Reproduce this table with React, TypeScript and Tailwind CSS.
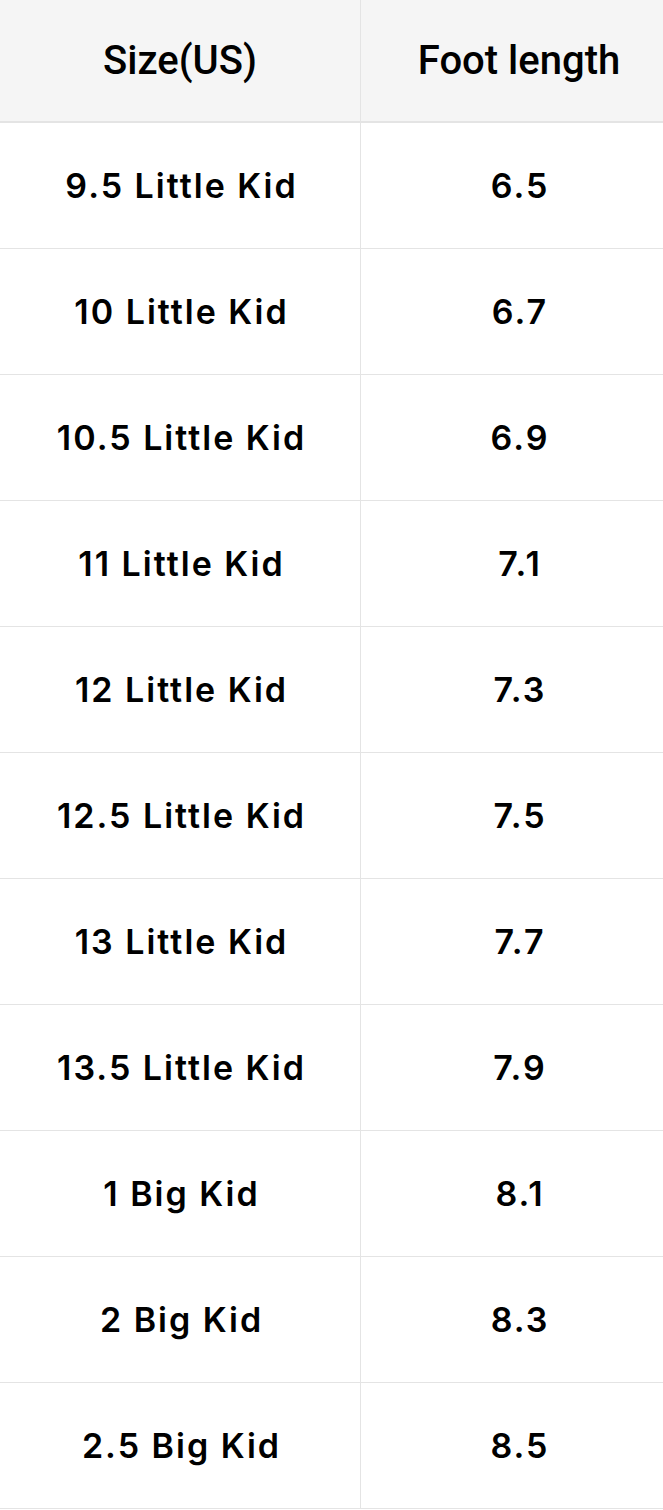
const rows: [string, string][] = [
  ["9.5 Little Kid", "6.5"],
  ["10 Little Kid", "6.7"],
  ["10.5 Little Kid", "6.9"],
  ["11 Little Kid", "7.1"],
  ["12 Little Kid", "7.3"],
  ["12.5 Little Kid", "7.5"],
  ["13 Little Kid", "7.7"],
  ["13.5 Little Kid", "7.9"],
  ["1 Big Kid", "8.1"],
  ["2 Big Kid", "8.3"],
  ["2.5 Big Kid", "8.5"],
];

export default function App() {
  return (
    <div className="w-[663px] overflow-hidden bg-white text-black">
      <div className="grid h-[123px] grid-cols-[361px_1fr] border-b-2 border-[#e4e4e4] bg-[#f5f5f5] font-['Roboto',sans-serif] text-[40px] font-medium">
        <div className="flex items-center justify-center border-r border-[#e4e4e4]">
          Size(US)
        </div>
        <div className="flex items-center justify-center pl-[14px]">Foot length</div>
      </div>
      {rows.map(([size, length]) => (
        <div
          key={size}
          className="grid h-[126px] grid-cols-[361px_1fr] border-b border-[#e4e4e4] font-['Inter',sans-serif] text-[34px] font-semibold tracking-[2px]"
        >
          <div className="flex items-center justify-center border-r border-[#e4e4e4] pl-[3px]">
            {size}
          </div>
          <div className="flex items-center justify-center pl-[16px]">{length}</div>
        </div>
      ))}
    </div>
  );
}
